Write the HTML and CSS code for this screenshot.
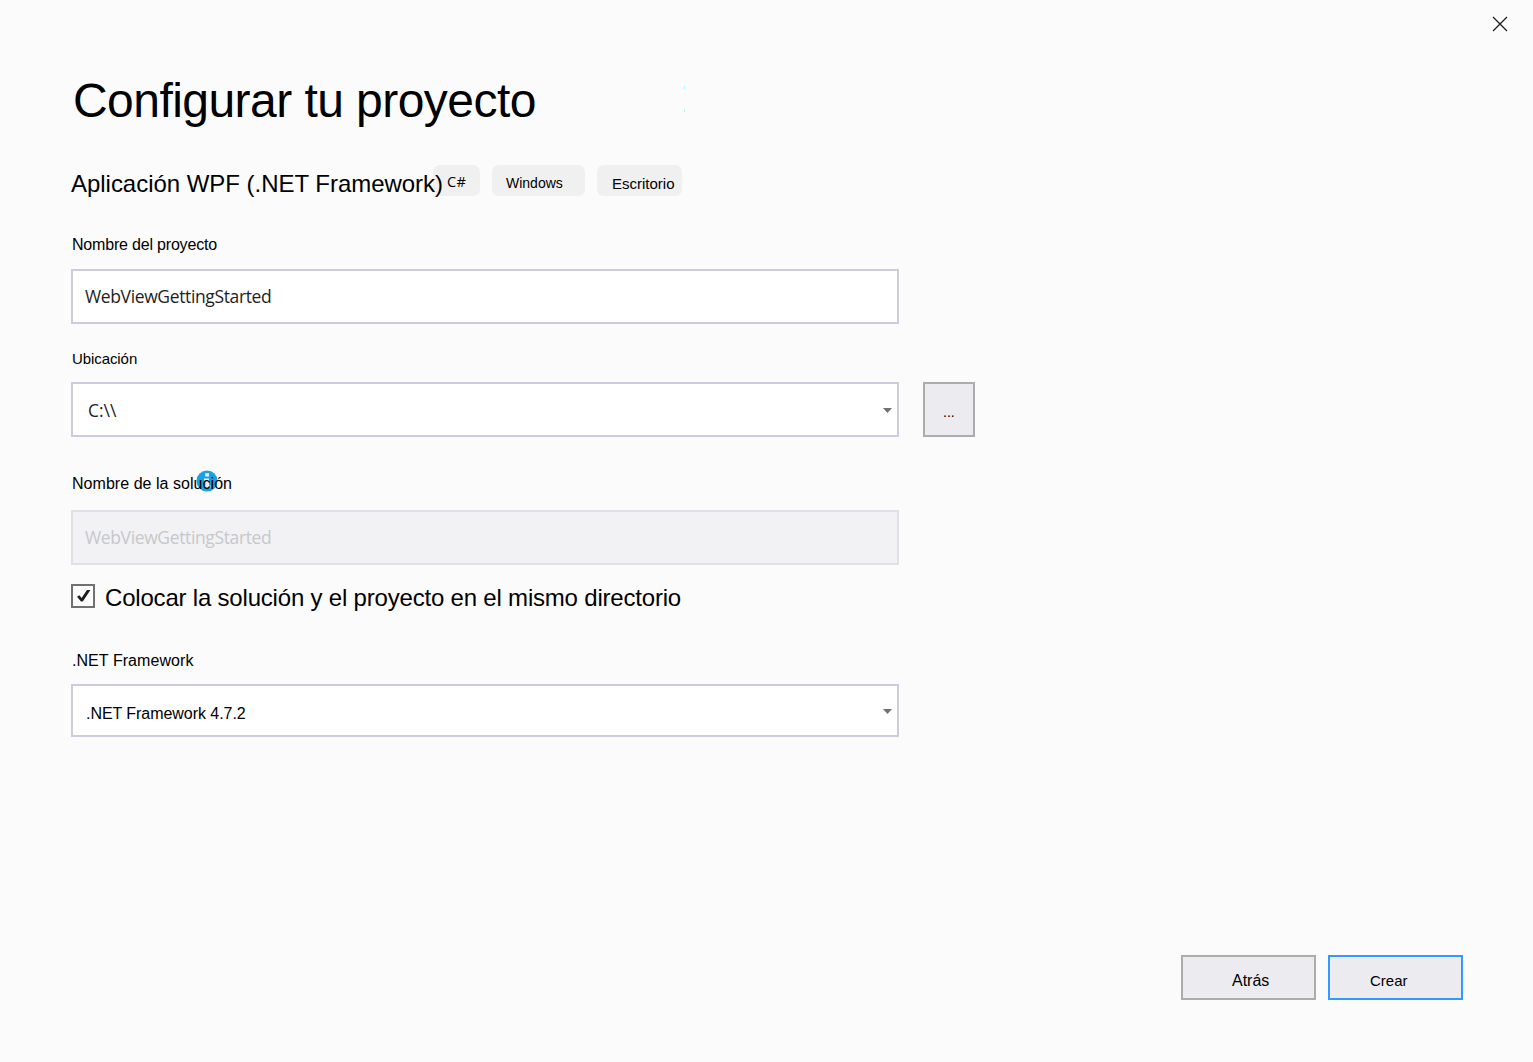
FILE: index.html
```html
<!DOCTYPE html>
<html lang="es">
<head>
<meta charset="utf-8">
<title>Configurar tu proyecto</title>
<link rel="stylesheet" href="styles.css">
</head>
<body>
<div class="window">
  <header class="titlebar">
    <svg class="close" width="16" height="16" viewBox="0 0 16 16"><path d="M1 1L15 15M15 1L1 15" stroke="#1e1e1e" stroke-width="1.3" fill="none"/></svg>
  </header>
  <main class="form">
    <div class="heading">
      <h1 class="title">Configurar tu proyecto</h1>
      <div class="marks"><i></i><i></i></div>
    </div>
    <div class="template">
      <h2 class="template-name">Aplicación WPF (.NET Framework)</h2>
      <span class="tag tag-lang">C#</span>
      <span class="tag tag-platform">Windows</span>
      <span class="tag tag-type">Escritorio</span>
    </div>
    <label class="label label-project">Nombre del proyecto</label>
    <div class="field"><span class="value project">WebViewGettingStarted</span></div>
    <label class="label label-location">Ubicación</label>
    <div class="location-row">
      <div class="field"><span class="value path">C:\\</span>
        <svg class="arrow" width="9" height="5" viewBox="0 0 9 5"><path d="M0 0H9L4.5 5Z" fill="#717171"/></svg>
      </div>
      <div class="button browse">...</div>
    </div>
    <label class="label label-solution"><svg class="info" width="22" height="22" viewBox="0 0 22 22"><circle cx="11" cy="11" r="10.5" fill="#1ba1e2"/><path d="M9.2 3.2h3.8v3.3H9.2zM8 8.5h5v7H14.5v2H7.5v-2h1.9v-5H8z" fill="#e4f3fb"/></svg><span class="label-text">Nombre de la solución</span></label>
    <div class="field disabled"><span class="value project">WebViewGettingStarted</span></div>
    <div class="check-row">
      <div class="checkbox"><svg width="20" height="20" viewBox="0 0 20 20"><path d="M4 10.8L6.4 9.2L8.6 12L14 4H17.4L9.8 15.6H8Z" fill="#1e1e1e"/></svg></div>
      <span class="check-text">Colocar la solución y el proyecto en el mismo directorio</span>
    </div>
    <label class="label label-framework">.NET Framework</label>
    <div class="field framework"><span class="value">.NET Framework 4.7.2</span>
      <svg class="arrow" width="9" height="5" viewBox="0 0 9 5"><path d="M0 0H9L4.5 5Z" fill="#717171"/></svg>
    </div>
  </main>
  <footer class="actions">
    <div class="button back">Atrás</div>
    <div class="button create">Crear</div>
  </footer>
</div>
</body>
</html>
```
FILE: styles.css
```css
* { box-sizing: border-box; }
body { margin: 0; background: #fbfbfb; color: #000; font-family: "Liberation Sans", Arial, sans-serif; }
.window { width: 1533px; height: 1062px; display: flex; flex-direction: column; overflow: hidden; }
.titlebar { height: 72px; flex: none; display: flex; justify-content: flex-end; padding: 16px 25px 0 0; }
.close { display: block; }
.form { flex: 1; padding-left: 71px; display: flex; flex-direction: column; align-items: flex-start; }
.heading { display: flex; height: 56px; }
.title { margin: 0 0 0 2px; width: 611px; font-size: 48px; line-height: 58px; font-weight: 400; letter-spacing: -0.55px; white-space: nowrap; }
.marks { display: flex; flex-direction: column; gap: 20px; padding-top: 14px; }
.marks i { width: 1px; height: 3px; background: #a6ffff; }
.template { display: flex; margin-top: 37px; height: 31px; }
.template-name { position: relative; z-index: 1; margin: 0; padding-top: 4px; width: 362px; font-size: 24px; line-height: 30px; font-weight: 400; letter-spacing: -0.03px; white-space: nowrap; }
.tag { height: 31px; border-radius: 7px; background: #f0f0f0; line-height: 36px; white-space: nowrap; }
.tag-lang { width: 47px; padding-left: 14px; font: 14.5px/33px "Open Sans", sans-serif; letter-spacing: 0.4px; }
.tag-platform { width: 93px; margin-left: 12px; padding-left: 14px; font-size: 14px; }
.tag-type { width: 85px; margin-left: 12px; padding-left: 15px; font-size: 15px; line-height: 38px; }
.label { position: relative; display: block; height: 20px; padding-left: 1px; font-size: 16px; line-height: 20px; white-space: nowrap; }
.label-text { position: relative; }
.label-project { margin: 39px 0 14px; letter-spacing: -0.19px; }
.label-location { margin: 25px 0 13px; font-size: 15px; letter-spacing: -0.08px; }
.label-solution { margin: 37px 0 16px; letter-spacing: 0.04px; }
.label-framework { margin: 38px 0 13px; letter-spacing: 0.06px; }
.info { position: absolute; left: 125px; top: -4px; }
.field { width: 828px; height: 55px; border: 2px solid #cbcddd; background: #fff; display: flex; align-items: center; justify-content: space-between; padding: 0 5px 0 12px; }
.value { font: 17.5px/24px "Open Sans", sans-serif; letter-spacing: -0.37px; color: #1e1e1e; }
.project { padding-bottom: 2px; }
.path { padding-left: 3px; letter-spacing: 0; }
.arrow { margin-top: 2px; }
.disabled { background: #f2f2f5; border-color: #dfe1e9; }
.disabled .value { color: #c7c8ca; }
.location-row { display: flex; gap: 24px; }
.button { border: 2px solid #acacac; background: #ececf0; height: 45px; width: 135px; font-size: 16px; line-height: 48px; white-space: nowrap; }
.browse { width: 52px; height: 55px; padding-left: 18px; font-size: 14px; line-height: 57px; }
.check-row { display: flex; gap: 10px; height: 30px; margin-top: 18px; }
.checkbox { width: 24px; height: 24px; margin-top: 1px; border: 2px solid #717171; background: #fefefe; }
.checkbox svg { display: block; }
.check-text { font-size: 24px; line-height: 30px; letter-spacing: -0.195px; white-space: nowrap; }
.framework { height: 53px; }
.framework .value { font: 16px/20px "Liberation Sans", Arial, sans-serif; letter-spacing: -0.05px; color: #000; padding: 7px 0 0 1px; }
.actions { display: flex; gap: 12px; justify-content: flex-end; padding: 0 70px 62px 0; }
.back { padding-left: 49px; }
.create { padding-left: 40px; font-size: 15px; line-height: 47px; border-color: #3399ff; }
```
